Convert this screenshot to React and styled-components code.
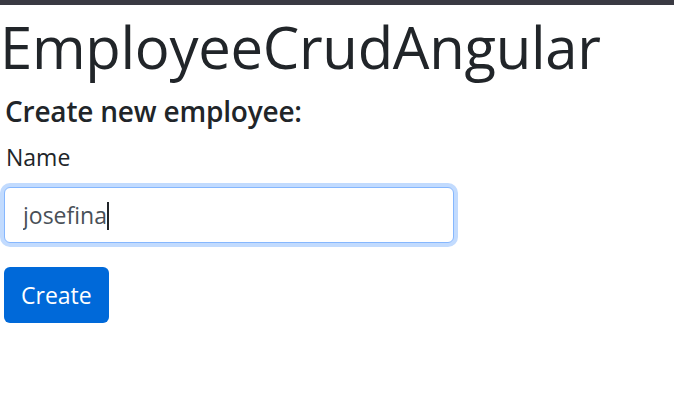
import React, { useState } from "react";
import styled, { createGlobalStyle } from "styled-components";

const GlobalStyle = createGlobalStyle`
  html, body {
    margin: 0;
    padding: 0;
    background: #ffffff;
  }
  body {
    font-family: "Open Sans", "Noto Sans", "Liberation Sans", sans-serif;
    color: #212529;
  }
`;

function App() {
  const [name, setName] = useState("josefina");

  return (
    <>
      <GlobalStyle />
      <TopBar />
      <Page>
        <Title>EmployeeCrudAngular</Title>
        <Form onSubmit={(e) => e.preventDefault()}>
          <FormTitle>Create new employee:</FormTitle>
          <Field>
            <Label htmlFor="name">Name</Label>
            <InputWrap>
              <Input
                id="name"
                value={name}
                autoFocus
                onChange={(e) => setName(e.target.value)}
              />
              <Caret />
            </InputWrap>
          </Field>
          <Button type="submit">Create</Button>
        </Form>
      </Page>
    </>
  );
}

const TopBar = styled.div`
  height: 5px;
  background: #3a3a43;
`;

const Page = styled.main`
  padding: 0 4px;
`;

const Title = styled.h1`
  margin: 7px 0 0 -4px;
  font-size: 58px;
  font-weight: 400;
  line-height: 1.2;
  letter-spacing: -0.3px;
  color: #212529;
`;

const Form = styled.form`
  display: flex;
  flex-direction: column;
  align-items: flex-start;
`;

const FormTitle = styled.h5`
  margin: 13px 0 0 1px;
  font-size: 28px;
  font-weight: 600;
  line-height: 1.2;
  letter-spacing: -0.2px;
`;

const Field = styled.div`
  display: flex;
  flex-direction: column;
  margin-top: 12px;
`;

const Label = styled.label`
  margin: 0 0 12px 2px;
  font-size: 23px;
  line-height: 1.5;
`;

const InputWrap = styled.div`
  position: relative;
  width: 450px;
`;

const Input = styled.input`
  box-sizing: border-box;
  width: 100%;
  height: 56px;
  padding: 0 18px;
  font: inherit;
  font-size: 23px;
  color: #495057;
  caret-color: transparent;
  background: #ffffff;
  border: 1.5px solid #86b7fe;
  border-radius: 6px;
  box-shadow: 0 0 0 4px #c2dbfe;
  outline: none;
`;

const Caret = styled.span`
  position: absolute;
  left: 103px;
  top: 15px;
  width: 1.5px;
  height: 28px;
  background: #212529;
  pointer-events: none;
`;

const Button = styled.button`
  margin-top: 24px;
  height: 56px;
  padding: 0 17px;
  font: inherit;
  font-size: 23px;
  color: #ffffff;
  background: #0069d9;
  border: none;
  border-radius: 6px;
  cursor: pointer;

  :hover {
    background: #005cbf;
  }
`;

export default App;
